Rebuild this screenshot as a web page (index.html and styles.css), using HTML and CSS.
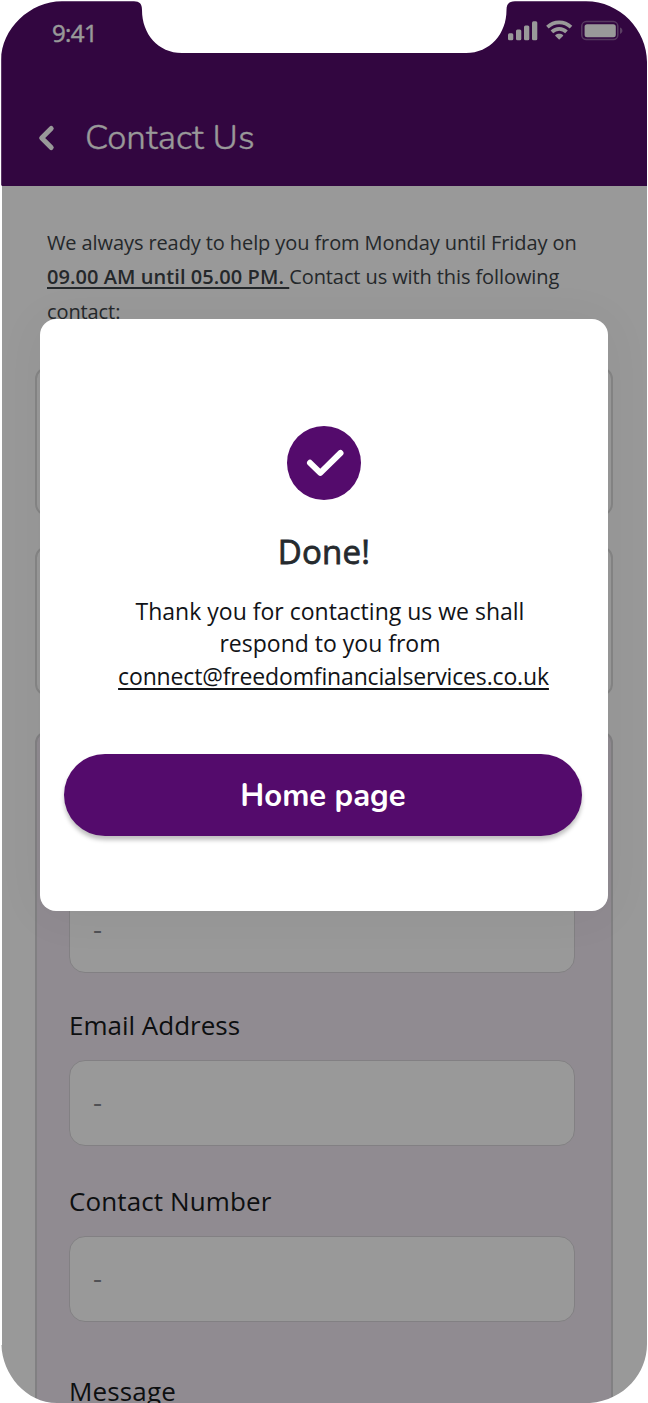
FILE: index.html
```html
<!DOCTYPE html>
<html lang="en">
<head>
<meta charset="utf-8">
<title>Contact Us</title>
<link rel="stylesheet" href="styles.css">
</head>
<body>
<div class="phone">
  <header class="header">
    <div class="status">
      <span class="time">9:41</span>
      <svg class="status-icons" width="120" height="24" viewBox="0 0 120 24">
        <g fill="#fff">
          <rect x="2" y="14.3" width="5.3" height="7" rx="1.5"/>
          <rect x="10" y="10.5" width="5.3" height="10.8" rx="1.5"/>
          <rect x="18" y="6.5" width="5.3" height="14.8" rx="1.5"/>
          <rect x="26" y="2.3" width="5.3" height="19" rx="1.5"/>
          <path d="M53.200 14.700c1.500 0 2.800.5 3.800 1.300.3.3.3.600 0 .900l-3.300 3.400q-.5.500-1 0l-3.300-3.400c-.3-.3-.3-.600 0-.900 1-.8 2.300-1.300 3.800-1.300z"/>
        </g>
        <g fill="none" stroke="#fff" stroke-width="3.700">
          <path d="M41.400 8.100c6.700-6.300 16.900-6.300 23.600 0"/>
          <path d="M45.900 12.900c4.200-4.100 10.400-4.100 14.600 0"/>
        </g>
        <rect x="75.800" y="2.600" width="36" height="18" rx="4.500" fill="none" stroke="#fff" stroke-opacity=".35" stroke-width="1.500"/>
        <rect x="78.600" y="5.300" width="31.200" height="13" rx="2.500" fill="#fff"/>
        <path d="M114 8.500c3.200 1.200 3.200 5.200 0 6.400z" fill="#fff" fill-opacity=".4"/>
      </svg>
    </div>
    <div class="title-row">
      <svg class="back" width="20" height="28" viewBox="0 0 20 28"><path d="M14.200 4.500 4.700 14 14.200 23.500" fill="none" stroke="#fff" stroke-width="5" stroke-linecap="round" stroke-linejoin="round"/></svg>
      <h1 class="title">Contact Us</h1>
    </div>
  </header>
  <main class="content">
    <p class="intro"><span class="l1">We always ready to help you from Monday until Friday on</span><br><b class="hours">09.00 AM until 05.00 PM. </b><span class="l2">Contact us with this following</span><br><span class="l3">contact:</span></p>
    <div class="card"></div>
    <div class="card"></div>
    <form class="form">
      <div class="input first">-</div>
      <label class="label email">Email Address</label>
      <div class="input">-</div>
      <label class="label number">Contact Number</label>
      <div class="input">-</div>
      <label class="label message">Message</label>
    </form>
  </main>
  <div class="overlay">
    <section class="modal">
      <svg class="check" width="74" height="74" viewBox="0 0 74 74"><circle cx="37" cy="37" r="37" fill="#540b6c"/><path d="M23 36.800 33.300 46.800 53.500 27" fill="none" stroke="#fff" stroke-width="6" stroke-linecap="round" stroke-linejoin="round"/></svg>
      <h2 class="done">Done!</h2>
      <p class="thanks"><span class="t1">Thank you for contacting us we shall</span><span class="t2">respond to you from</span><span class="mail">connect@freedomfinancialservices.co.uk</span></p>
      <button class="home"><span>Home page</span></button>
    </section>
  </div>
  <svg class="frame" width="648" height="1403" viewBox="0 0 648 1403">
    <path fill="#fff" fill-rule="evenodd" d="M0 0H648V1403H0V1345H1.500C2 1374 26 1403 57 1403H590C625 1400 647 1373 647 1344V62C647 30 620 1.300 586 1.300H515C509 1.300 506.500 4 506.500 10C506.500 34 490 53 466 53H182C158 53 142 34 142 10C142 4 139.500 1.300 134 1.300H62C30 1.300 1.200 29 1.200 60V185.500H2V1345H0Z"/>
  </svg>
</div>
</body>
</html>
```
FILE: styles.css
```css
* { box-sizing: border-box; }
body { margin: 0; background: #fff; font-family: "Open Sans", "Noto Sans", sans-serif; }
.phone { position: relative; width: 648px; height: 1403px; overflow: hidden; background: #fff; }
.header { height: 185.5px; background: #540b6c; color: #fff; }
.status { display: flex; justify-content: space-between; height: 60px; padding: 19px 22px 0 52px; }
.time { margin-top: -1px; font-size: 24px; line-height: 30px; letter-spacing: -.6px; -webkit-text-stroke: .4px #fff; }
.title-row { display: flex; align-items: center; height: 56px; margin-top: 50px; padding-left: 37px; }
.title { margin: 0 0 0 28px; font-family: Nunito, "Open Sans", sans-serif; font-size: 35px; line-height: 46px; font-weight: 300; white-space: nowrap; -webkit-text-stroke: .3px #fff; }
.content { padding: 40px 35px 0 35px; }
.intro { height: 104px; margin: 0 0 37px 12px; font-size: 20px; line-height: 34.500px; color: #3d4448; white-space: pre; }
.l1 { letter-spacing: -.1px; }
.hours { font-weight: 600; letter-spacing: .06px; text-decoration: underline; text-decoration-thickness: 1.500px; text-underline-offset: 3px; }
.l2, .l3 { letter-spacing: -.1px; }
.card { width: 578px; height: 149.500px; margin-bottom: 30px; border: 2px solid #dedede; border-radius: 12px; }
.form { width: 578px; height: 720px; margin-top: 35.500px; padding: 154px 36px 0 32px; border: 2px solid #d8d5d9; border-radius: 12px; background: #f0e8f2; }
.input { height: 86px; padding: 0 23px; border: 1.500px solid #d9d6da; border-radius: 16px; background: #fff; color: #86888e; font-size: 28px; line-height: 81px; }
.label { display: block; height: 87px; padding-top: 34px; font-size: 26px; line-height: 36px; color: #16191c; white-space: nowrap; }
.number { height: 90px; padding-top: 37px; letter-spacing: .12px; }
.message { padding-top: 51px; letter-spacing: .15px; }
.overlay { position: absolute; inset: 0; padding: 318.500px 40px 0; background: rgba(0, 0, 0, .4); }
.modal { display: flex; flex-direction: column; align-items: center; width: 568px; height: 592px; padding-top: 107px; border-radius: 16px; background: #fff; box-shadow: 0 3px 50px rgba(0, 0, 0, .05); }
.done { margin: 30px 0 0; font-size: 33px; line-height: 44px; font-weight: 400; color: #252a2e; letter-spacing: .2px; -webkit-text-stroke: .8px #252a2e; }
.thanks { display: flex; flex-direction: column; align-items: center; margin: 21px 0 0 12px; font-size: 23px; line-height: 32.600px; color: #111317; white-space: nowrap; }
.mail { margin-left: 7px; letter-spacing: -.15px; text-decoration: underline; text-decoration-thickness: 1.500px; text-underline-offset: 3px; }
.home { width: 518px; height: 82.500px; margin: 61.300px 0 0 -2px; padding: 2px 0 0; border: 0; border-radius: 42px; background: #540b6c; color: #fff; box-shadow: 0 4px 4px rgba(0, 0, 0, .25); font: 700 31px/42px Nunito, "Open Sans", sans-serif; }
.frame { position: absolute; inset: 0; }
```
